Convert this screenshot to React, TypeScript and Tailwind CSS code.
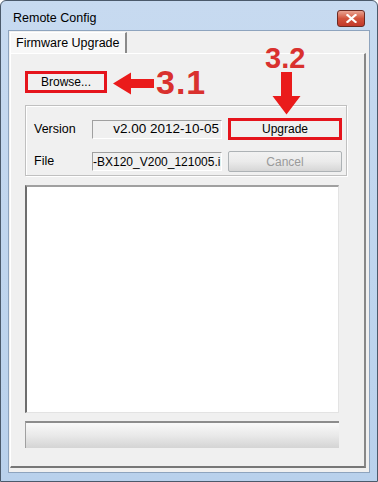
import React from 'react';

const ui = { fontFamily: '"Liberation Sans", Arial, sans-serif' };
const mark = { fontFamily: '"Liberation Sans", Arial, sans-serif' };

function WinButton({
  label,
  disabled,
  className = '',
}: {
  label: string;
  disabled?: boolean;
  className?: string;
}) {
  return (
    <div
      className={`flex items-center justify-center border border-[#707070] rounded-[2px] bg-gradient-to-b from-[#f2f2f2] via-[#ebebeb] to-[#d6d6d6] text-[12px] ${
        disabled ? 'text-[#9a9a9a] border-[#adb2b5]' : 'text-black'
      } ${className}`}
    >
      {label}
    </div>
  );
}

function Field({ value, align }: { value: string; align: 'left' | 'right' }) {
  return (
    <div
      className={`w-[130px] h-[19px] flex items-center overflow-hidden whitespace-nowrap bg-[#f0f0f0] border-t border-l border-t-[#a0a0a0] border-l-[#a0a0a0] border-b border-r border-b-white border-r-white text-black ${
        align === 'right' ? 'justify-end pr-[2px] text-[13.5px]' : 'justify-start text-[12px]'
      }`}
    >
      {value}
    </div>
  );
}

export default function App() {
  return (
    <div
      className="relative w-[378px] h-[482px] rounded-t-[6px] border border-[#4b5a6b] bg-gradient-to-b from-[#c7daf0] to-[#b9d1ec] px-[7px] pb-[8px] flex flex-col"
      style={ui}
    >
      {/* title bar */}
      <div className="h-[29px] flex items-start justify-between pl-[5px] pr-[5px] shrink-0">
        <span className="mt-[11px] text-[12.5px] leading-none text-black">Remote Config</span>
        <div className="mt-[9px] w-[28px] h-[17px] rounded-[3px] border border-[#6b2a22] bg-gradient-to-b from-[#e8a392] via-[#d2533c] to-[#c2382a] flex items-center justify-center">
          <svg width="11" height="9" viewBox="0 0 11 9">
            <path d="M1.5 1 L9.5 8 M9.5 1 L1.5 8" stroke="#ffffff" strokeWidth="2.2" strokeLinecap="square" />
          </svg>
        </div>
      </div>

      {/* client area */}
      <div className="flex-1 bg-[#f0f0f0] border border-[#8ea4be] pt-[1px] pl-[1px] pr-[3px] pb-[4px] flex flex-col">
        {/* tab strip */}
        <div className="flex shrink-0">
          <div className="h-[21px] px-[5px] flex items-center bg-[#f7f7f7] border-t border-l border-t-white border-l-white border-r-2 border-r-[#8a8a8a] text-[12.5px] text-black">
            Firmware Upgrade
          </div>
        </div>

        {/* tab page */}
        <div className="flex-1 border-t border-l border-t-white border-l-white border-r-2 border-b-2 border-r-[#888888] border-b-[#777777] pl-[14px] pt-[17px] flex flex-col">
          <div className="w-[82px] h-[22px] border-[3px] border-[#e5141c] flex items-center justify-center text-[12px] text-black bg-[#f0f0f0]">
            Browse...
          </div>

          {/* group box */}
          <div className="mt-[12px] w-[322px] h-[71px] border border-[#c0c0c0] shadow-[inset_1px_1px_0_#ffffff,1px_1px_0_#ffffff] pl-[8px] pt-[12px] flex flex-col gap-[11px]">
            <div className="flex items-center">
              <span className="w-[58px] text-[12.5px] text-black">Version</span>
              <Field value="v2.00 2012-10-05" align="right" />
              <div className="ml-[6px] w-[114px] h-[22px] border-[3px] border-[#e5141c] flex items-center justify-center text-[12px] text-black bg-[#f0f0f0]">
                Upgrade
              </div>
            </div>
            <div className="flex items-center">
              <span className="w-[58px] text-[12.5px] text-black">File</span>
              <Field value="-BX120_V200_121005.i" align="left" />
              <WinButton label="Cancel" disabled className="ml-[6px] w-[114px] h-[21px]" />
            </div>
          </div>

          {/* log */}
          <div className="mt-[9px] w-[314px] h-[228px] bg-white border-t-2 border-l-2 border-t-[#a0a0a0] border-l-[#6d6d6d] border-r border-b border-r-[#e3e3e3] border-b-[#e3e3e3]" />

          {/* progress */}
          <div className="mt-[8px] w-[314px] h-[27px] border-t-2 border-l border-t-[#8c8c8c] border-l-[#a0a0a0] bg-gradient-to-b from-[#f9f9f9] via-[#e9e9e9] to-[#d4d4d4]" />
        </div>
      </div>

      {/* annotation 3.1 */}
      <svg className="absolute left-[112px] top-[71px]" width="42" height="23" viewBox="0 0 42 23">
        <path d="M0 11.5 L18 0.5 L18 7 L41 7 L41 16 L18 16 L18 22.5 Z" fill="#ea1b1b" />
      </svg>
      <span
        className="absolute left-[155px] top-[64px] text-[34px] leading-none font-bold tracking-[1px] text-[#d9312e]"
        style={mark}
      >
        3.1
      </span>

      {/* annotation 3.2 */}
      <span
        className="absolute left-[264px] top-[43px] text-[29px] leading-none font-bold text-[#d9312e]"
        style={mark}
      >
        3.2
      </span>
      <svg className="absolute left-[271px] top-[71px]" width="29" height="43" viewBox="0 0 29 43">
        <path d="M9 0 L20 0 L20 24 L28.5 24 L14.5 42.5 L0.5 24 L9 24 Z" fill="#ea1b1b" />
      </svg>
    </div>
  );
}
